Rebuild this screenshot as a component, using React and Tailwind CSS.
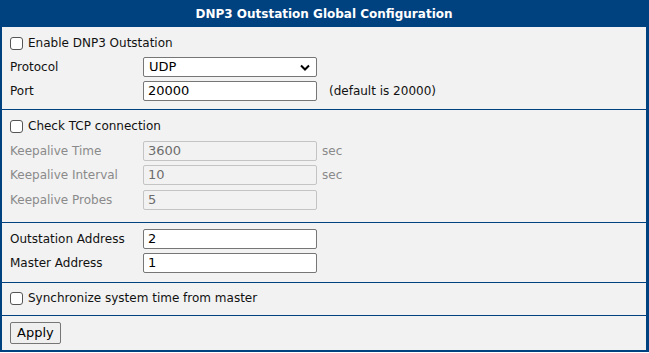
import React from 'react';

// Global config form for the DNP3 outstation
const font = { fontFamily: 'Tahoma, "DejaVu Sans", sans-serif' };

function Check({ label }) {
  return (
    <label className="flex h-6 items-center gap-[5px] text-[12px] text-[#111]">
      <span className="h-[13px] w-[13px] rounded-[3px] border border-[#555] bg-white" />
      {label}
    </label>
  );
}

function Row({ label, value, suffix, disabled, select }) {
  return (
    <div className="flex h-6 items-center text-[12px]">
      <span className={`w-[133px] ${disabled ? 'text-[#8a8a8a]' : 'text-[#111]'}`}>{label}</span>
      {select ? (
        <div className="flex h-[20px] w-[174px] items-center justify-between rounded-[2px] border border-[#767676] bg-white pl-[5px] pr-[6px] text-[13px] text-black">
          <span>{value}</span>
          <svg width="10" height="7" viewBox="0 0 10 7">
            <path d="M1 1.5 L5 5.5 L9 1.5" fill="none" stroke="#000" strokeWidth="2" />
          </svg>
        </div>
      ) : (
        <div
          className={`flex h-[20px] w-[174px] items-center rounded-[2px] border px-[4px] text-[13px] ${
            disabled ? 'border-[#c4c4c4] bg-[#f2f2f2] text-[#6d6d6d]' : 'border-[#767676] bg-white text-black'
          }`}
        >
          {value}
        </div>
      )}
      {suffix && (
        <span className={`ml-[5px] text-[12px] ${disabled ? 'text-[#8a8a8a]' : 'ml-[12px] text-[#111]'}`}>{suffix}</span>
      )}
    </div>
  );
}

export default function App() {
  return (
    <div style={font} className="h-[353px] w-[649px] bg-white">
      <div className="flex h-[352px] w-[649px] flex-col border-b-2 border-l-2 border-r-[3px] border-[#00417f] bg-[#f2f2f2]">
        <div className="flex h-[27px] shrink-0 items-center justify-center bg-[#00417f] text-[12px] font-bold text-white">
          DNP3 Outstation Global Configuration
        </div>
        <div className="border-b border-[#00417f] px-2 pb-[6px] pt-1">
          <Check label="Enable DNP3 Outstation" />
          <Row label="Protocol" value="UDP" select />
          <Row label="Port" value="20000" suffix="(default is 20000)" />
        </div>
        <div className="border-b border-[#00417f] px-2 pb-[10px] pt-1">
          <Check label="Check TCP connection" />
          <div className="mt-px">
            <Row label="Keepalive Time" value="3600" suffix="sec" disabled />
          </div>
          <Row label="Keepalive Interval" value="10" suffix="sec" disabled />
          <div className="mt-px">
            <Row label="Keepalive Probes" value="5" disabled />
          </div>
        </div>
        <div className="border-b border-[#00417f] px-2 pb-[7px] pt-1">
          <Row label="Outstation Address" value="2" />
          <Row label="Master Address" value="1" />
        </div>
        <div className="border-b border-[#00417f] px-2 pb-[5px] pt-[3px]">
          <Check label="Synchronize system time from master" />
        </div>
        <div className="flex flex-1 items-center px-2">
          <button className="h-[22px] rounded-[2px] border border-[#767676] bg-[#efefef] px-[6px] text-[13px] text-black">
            Apply
          </button>
        </div>
      </div>
    </div>
  );
}
